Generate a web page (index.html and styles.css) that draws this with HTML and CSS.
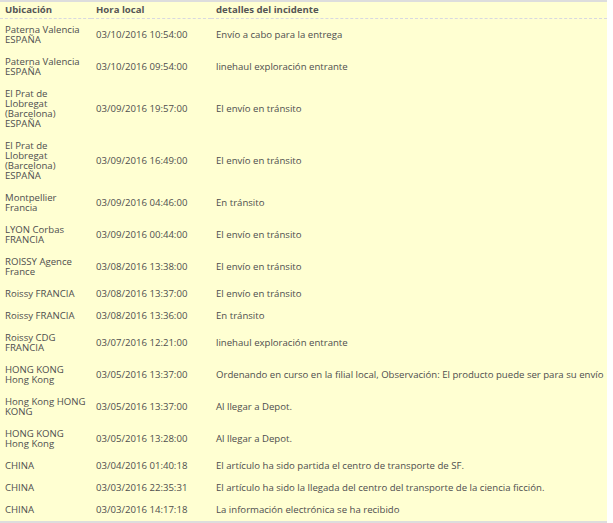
FILE: index.html
```html
<!DOCTYPE html>
<html lang="es">
<head>
  <meta charset="UTF-8">
  <title>Seguimiento del envío</title>
  <link rel="stylesheet" href="styles.css">
</head>
<body>
  <table class="tracking">
    <thead>
      <tr>
        <th class="col-place">Ubicación</th>
        <th class="col-time">Hora local</th>
        <th class="col-detail">detalles del incidente</th>
      </tr>
    </thead>
    <tbody>
      <tr><td>Paterna Valencia ESPAÑA</td><td>03/10/2016 10:54:00</td><td>Envío a cabo para la entrega</td></tr>
      <tr><td>Paterna Valencia ESPAÑA</td><td>03/10/2016 09:54:00</td><td>linehaul exploración entrante</td></tr>
      <tr><td>El Prat de Llobregat (Barcelona) ESPAÑA</td><td>03/09/2016 19:57:00</td><td>El envío en tránsito</td></tr>
      <tr><td>El Prat de Llobregat (Barcelona) ESPAÑA</td><td>03/09/2016 16:49:00</td><td>El envío en tránsito</td></tr>
      <tr><td>Montpellier Francia</td><td>03/09/2016 04:46:00</td><td>En tránsito</td></tr>
      <tr><td>LYON Corbas FRANCIA</td><td>03/09/2016 00:44:00</td><td>El envío en tránsito</td></tr>
      <tr><td>ROISSY Agence France</td><td>03/08/2016 13:38:00</td><td>El envío en tránsito</td></tr>
      <tr><td>Roissy FRANCIA</td><td>03/08/2016 13:37:00</td><td>El envío en tránsito</td></tr>
      <tr><td>Roissy FRANCIA</td><td>03/08/2016 13:36:00</td><td>En tránsito</td></tr>
      <tr><td>Roissy CDG FRANCIA</td><td>03/07/2016 12:21:00</td><td>linehaul exploración entrante</td></tr>
      <tr><td>HONG KONG Hong Kong</td><td>03/05/2016 13:37:00</td><td>Ordenando en curso en la filial local, Observación: El producto puede ser para su envío</td></tr>
      <tr><td>Hong Kong HONG KONG</td><td>03/05/2016 13:37:00</td><td>Al llegar a Depot.</td></tr>
      <tr><td>HONG KONG Hong Kong</td><td>03/05/2016 13:28:00</td><td>Al llegar a Depot.</td></tr>
      <tr><td>CHINA</td><td>03/04/2016 01:40:18</td><td>El artículo ha sido partida el centro de transporte de SF.</td></tr>
      <tr><td>CHINA</td><td>03/03/2016 22:35:31</td><td>El artículo ha sido la llegada del centro del transporte de la ciencia ficción.</td></tr>
      <tr><td>CHINA</td><td>03/03/2016 14:17:18</td><td>La información electrónica se ha recibido</td></tr>
    </tbody>
  </table>
</body>
</html>
```

FILE: styles.css
```css
* {
  margin: 0;
  padding: 0;
  box-sizing: border-box;
}

body {
  font-family: 'Open Sans', 'Noto Sans', sans-serif;
  font-size: 9.6px;
  color: #4e4e4e;
  background-color: #ffffff;
}

.tracking {
  width: 607px;
  border-collapse: collapse;
  background-color: #ffffd2;
  border-top: 2px solid #dddddd;
  border-bottom: 2px solid #dddddd;
}

.tracking th {
  text-align: left;
  font-weight: bold;
  color: #555555;
  height: 17px;
  padding: 0 5px;
  line-height: 10px;
  border-bottom: 1px dashed #d8d8e0;
}

.tracking td {
  text-align: left;
  vertical-align: middle;
  padding: 6px 5px;
  line-height: 10px;
}

.tracking td:last-child {
  padding-right: 0;
  white-space: nowrap;
}

.col-place {
  width: 91px;
}

.col-time {
  width: 120px;
}
```
